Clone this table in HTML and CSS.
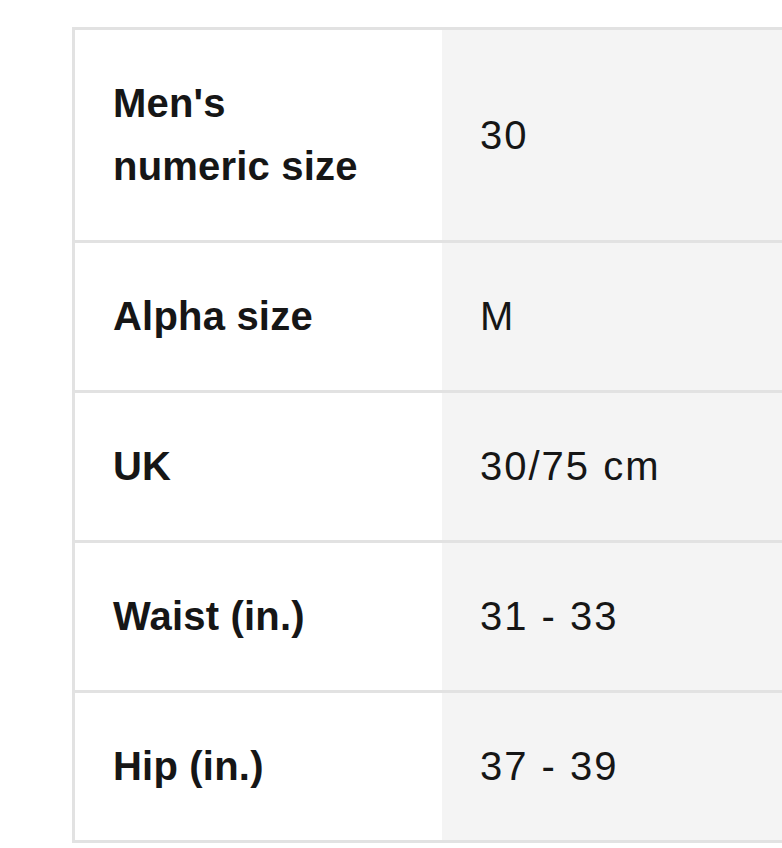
FILE: index.html
```html
<!DOCTYPE html>
<html lang="en">
<head>
<meta charset="utf-8">
<title>Size chart</title>
<link rel="stylesheet" href="styles.css">
</head>
<body>
<div class="wrap">
  <table class="size-table">
    <tbody>
      <tr><th>Men's<br>numeric size</th><td>30</td></tr>
      <tr><th>Alpha size</th><td>M</td></tr>
      <tr><th>UK</th><td>30/75 cm</td></tr>
      <tr><th>Waist (in.)</th><td>31 - 33</td></tr>
      <tr><th>Hip (in.)</th><td>37 - 39</td></tr>
    </tbody>
  </table>
</div>
</body>
</html>
```
FILE: styles.css
```css
html, body {
  margin: 0;
  padding: 0;
  background: #ffffff;
  overflow: hidden;
}
.wrap {
  padding: 27px 0 0 72px;
}
.size-table {
  border-collapse: separate;
  border-spacing: 0;
  width: 760px;
  border-left: 3px solid #e2e2e2;
  border-top: 3px solid #e2e2e2;
  font-family: "Liberation Sans", Arial, sans-serif;
  font-size: 40px;
  line-height: 63px;
  color: #161616;
}
.size-table th,
.size-table td {
  padding: 42px 38px;
  text-align: left;
  vertical-align: middle;
  border-bottom: 3px solid #e2e2e2;
}
.size-table th {
  width: 291px;
  font-weight: 700;
  letter-spacing: 0.2px;
  background: #ffffff;
}
.size-table td {
  font-weight: 400;
  letter-spacing: 2px;
  background: #f4f4f4;
}
```
